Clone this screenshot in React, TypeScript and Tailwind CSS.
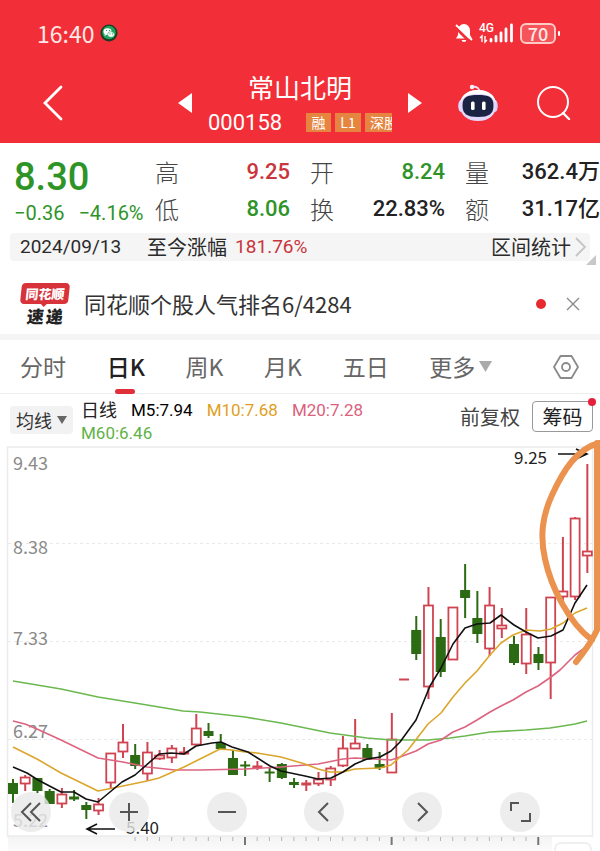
import React from "react";

type Candle = { up: boolean; high: number; top: number; bottom: number; low: number };

const c = (kind: "r" | "g", high: number, top: number, bottom: number, low: number): Candle => ({
  up: kind === "r",
  high,
  top,
  bottom,
  low,
});

const candles: Candle[] = [
  c("g", 779, 783, 794, 803),
  c("r", 775, 777, 784, 791),
  c("g", 778, 778, 791, 793),
  c("g", 789, 791, 804, 804),
  c("r", 788, 794, 804, 808),
  c("g", 790, 797, 799, 801),
  c("g", 802, 805, 810, 819),
  c("r", 798, 804, 811, 815),
  c("r", 753, 753, 783, 788),
  c("r", 724, 742, 752, 758),
  c("g", 744, 755, 766, 769),
  c("r", 742, 752, 774, 781),
  c("r", 750, 755, 759, 760),
  c("r", 745, 748, 758, 763),
  c("r", 747, 752, 754, 755),
  c("r", 714, 728, 745, 745),
  c("g", 723, 731, 736, 738),
  c("g", 734, 743, 749, 750),
  c("g", 750, 758, 775, 775),
  c("g", 761, 765, 766, 776),
  c("r", 761, 766, 768, 770),
  c("g", 768, 772, 773, 782),
  c("g", 763, 764, 778, 779),
  c("g", 778, 782, 785, 788),
  c("r", 780, 783, 785, 791),
  c("r", 772, 779, 784, 786),
  c("r", 766, 768, 780, 786),
  c("r", 736, 748, 766, 767),
  c("r", 719, 743, 749, 749),
  c("g", 744, 748, 760, 760),
  c("g", 752, 764, 768, 770),
  c("r", 713, 739, 773, 773),
  c("r", 679, 679, 680, 680),
  c("g", 616, 630, 654, 660),
  c("r", 587, 605, 687, 699),
  c("g", 619, 637, 672, 677),
  c("r", 607, 607, 660, 660),
  c("g", 564, 590, 598, 618),
  c("g", 591, 618, 634, 643),
  c("r", 587, 605, 649, 656),
  c("r", 608, 625, 629, 638),
  c("g", 636, 644, 663, 665),
  c("r", 608, 634, 664, 674),
  c("g", 647, 654, 663, 670),
  c("r", 597, 597, 663, 699),
  c("r", 537, 591, 597, 601),
  c("r", 517, 518, 597, 600),
  c("r", 464, 551, 556, 573),
];

const averages = [
  {
    color: "#6bb84f",
    points:
      "13,681 61,689 98,697 135,703 183,711 200,712 245,717 281,723 330,733 367,738 391,740 428,740 450,738 465,736 490,732 526,730 550,728 563,726 575,724 587,721",
  },
  {
    color: "#dc6480",
    points:
      "13,721 25,724 37,729 61,740 98,758 123,762 147,767 175,770 200,770 245,769 281,767 318,764 343,759 355,758 391,760 400,757 416,751 428,744 441,740 453,732 465,727 477,720 490,712 501,706 513,700 526,692 538,686 551,677 560,670 575,655 590,644",
  },
  {
    color: "#dba62b",
    points:
      "13,747 37,759 61,773 98,791 123,786 147,781 159,778 184,767 200,759 220,749 232,750 245,752 257,753 281,757 305,764 318,769 330,772 343,772 355,769 380,768 391,765 400,757 408,750 428,724 441,713 453,697 465,683 477,671 490,655 501,643 513,635 526,630 540,631 551,629 563,623 575,613 587,608",
  },
  {
    color: "#111111",
    points:
      "13,767 27,773 38,780 61,792 74,792 86,799 98,802 122,782 135,775 159,754 171,753 184,754 196,746 212,743 221,742 232,747 248,752 270,766 281,771 305,776 318,779 331,778 343,772 355,764 367,759 380,757 391,751 400,742 416,720 430,686 441,668 453,644 465,628 477,624 490,623 501,615 514,625 526,632 538,638 551,636 563,630 575,603 587,585",
  },
];

const RED = "#cf4450";
const GREEN = "#2c6a14";

function Chart() {
  const ticks = Array.from({ length: 34 }, (_, i) => 135 + i * 12.22);
  return (
    <svg viewBox="0 444 600 407" className="block w-full overflow-visible" role="img" aria-label="日K线图">
      <defs>
        <linearGradient id="scrub" x1="0" x2="0" y1="0" y2="1">
          <stop offset="0" stopColor="#f3f3f3" />
          <stop offset="1" stopColor="#fbfbfb" />
        </linearGradient>
      </defs>
      <rect x="8" y="836" width="544" height="15" fill="url(#scrub)" />
      <rect x="555" y="843" width="36" height="20" rx="6" fill="#fff" stroke="#f0f0f0" strokeWidth="2" />
      <rect x="7.5" y="447" width="585" height="389" fill="none" stroke="#ececec" strokeWidth="1.5" />
      {[543.5, 641.5, 739.5].map((y) => (
        <line key={y} x1="8" x2="592" y1={y} y2={y} stroke="#e9e9e9" strokeDasharray="3 3" />
      ))}
      {ticks.map((x, i) => {
        const major = i % 12 === 9;
        return (
          <line
            key={x}
            x1={x}
            x2={x}
            y1="837"
            y2={major ? 845 : 841}
            stroke={major ? "#777" : "#b5b5b5"}
            strokeWidth={major ? 2 : 1}
          />
        );
      })}
      <g fill="#8a8a8a" fontSize="18" fontFamily="'Noto Sans CJK SC', sans-serif">
        <text x="13" y="470">9.43</text>
        <text x="13" y="554">8.38</text>
        <text x="13" y="645">7.33</text>
        <text x="13" y="738">6.27</text>
        <text x="13" y="827">5.22</text>
      </g>
      {candles.map((k, i) => {
        const x = 13 + i * 12.22;
        const color = k.up ? RED : GREEN;
        const h = k.bottom - k.top;
        return (
          <g key={i} stroke={color} strokeWidth="2">
            {k.high < k.top && <line x1={x} x2={x} y1={k.high} y2={k.top} />}
            {k.low > k.bottom && <line x1={x} x2={x} y1={k.bottom} y2={k.low} />}
            {h < 3 ? (
              <line x1={x - 5} x2={x + 5} y1={k.top + h / 2} y2={k.top + h / 2} strokeWidth={h + 1} />
            ) : (
              <rect
                x={x - 4.5}
                y={k.top + 0.5}
                width="9"
                height={h - 1}
                fill={k.up ? "#fff" : color}
                strokeWidth={k.up ? 1.8 : 1}
              />
            )}
          </g>
        );
      })}
      {averages.map((a) => (
        <polyline key={a.color} points={a.points} fill="none" stroke={a.color} strokeWidth="1.6" strokeLinejoin="round" />
      ))}
      <g fill="#222" fontSize="17" fontFamily="'Noto Sans CJK SC', sans-serif">
        <text x="514" y="464">9.25</text>
        <text x="126" y="834">5.40</text>
      </g>
      <g fill="none" stroke="#111" strokeWidth="1.6">
        <path d="M558 454H586M576 449L587 454L576 459" />
        <path d="M115 829H87M97 824L87 829L97 834" />
      </g>
      <path
        d="M599 443C577 449 564 469 552 495C542 517 540 536 545 559C551 587 569 623 592 640M597 443V630Q590 645 576 662"
        fill="none"
        stroke="#eb924e"
        strokeWidth="6"
        strokeLinecap="round"
        strokeLinejoin="round"
      />
    </svg>
  );
}

const controls = [
  { label: "最早", d: "M20 11L11 20L20 29M29 11L20 20L29 29" },
  { label: "放大", d: "M20 11V29M11 20H29" },
  { label: "缩小", d: "M11 20H29" },
  { label: "向左", d: "M24 11L15 20L24 29" },
  { label: "向右", d: "M16 11L25 20L16 29" },
  { label: "全屏", d: "M11 19V11H19M30 21V29H21" },
];

function Robot() {
  return (
    <svg viewBox="0 0 40 38" className="h-[38px] w-10">
      <path d="M21 8Q22 3 15 2.5" fill="none" stroke="#f6dcf2" strokeWidth="1.8" />
      <circle cx="14" cy="3" r="2.2" fill="#fbeef8" />
      <ellipse cx="3" cy="22" rx="2.8" ry="6" fill="#e3d8fa" />
      <ellipse cx="37" cy="22" rx="2.8" ry="6" fill="#d9ccf6" />
      <path d="M20 6C32 6 38 13 38 21.5C38 31 31 37 20 37S2 31 2 21.5C2 13 8 6 20 6Z" fill="#e2d8fb" />
      <path d="M20 6C31 6 37 12 38 19C34 12 30 10 20 10S6 12 2 19C3 12 9 6 20 6Z" fill="#fff" />
      <path d="M20 11C31 11 35.5 13 35.5 21.5S31 33 20 33S4.5 30 4.5 21.5S9 11 20 11Z" fill="#1b2344" />
      <rect x="13" y="17.5" width="3.6" height="8.5" rx="1.5" fill="#fff" />
      <rect x="24" y="17.5" width="3.6" height="8.5" rx="1.5" fill="#fff" />
    </svg>
  );
}

function StatusBar() {
  return (
    <div className="flex h-[66px] items-center justify-between pr-10 pl-[37px] text-[#ffe9e6]">
      <div className="flex items-center gap-[6px]">
        <span className="text-[23px] leading-6">16:40</span>
        <svg viewBox="0 0 18 18" className="size-[18px]">
          <circle cx="9" cy="9" r="8.5" fill="#173d27" />
          <circle cx="9" cy="8.5" r="6.8" fill="#20a35c" />
          <ellipse cx="7.5" cy="7.5" rx="4" ry="3.3" fill="#fff" />
          <path d="M5 9L4.5 12L8 10Z" fill="#fff" />
          <ellipse cx="11" cy="10.5" rx="3.4" ry="2.8" fill="#fff" stroke="#20a35c" strokeWidth=".6" />
          <path d="M6 6.5h1M9 6.5h1M9.5 10h1M12 10h1" stroke="#20a35c" />
        </svg>
      </div>
      <div className="flex items-center gap-[6px]">
        <svg viewBox="0 0 18 20" className="h-5 w-[18px]">
          <path d="M9 1C12.5 1 15 4 15 7.5V12L17 15.5H1L3 12V7.5C3 4 5.5 1 9 1Z" fill="#fff" />
          <path d="M6.5 17H11.5Q11 19 9 19T6.5 17Z" fill="#fff" />
          <path d="M0 4L15 19" stroke="#f22f38" strokeWidth="3" />
          <path d="M1 2L17 17" stroke="#fff" strokeWidth="1.8" />
        </svg>
        <svg viewBox="0 -4 35 28" className="h-7 w-[35px]">
          <text x="0" y="9" fontSize="12" fontWeight="500" fill="#fff" fontFamily="Roboto, sans-serif">4G</text>
          <path d="M3 19V13L1 15M6 13V19L8 17" fill="none" stroke="#fff" strokeWidth="1.4" />
          <path d="M12 18V16.5M17 18V13.5M22 18V10M27 18V6M32.5 18V2" stroke="#fff" strokeWidth="2.8" strokeLinecap="round" />
        </svg>
        <div className="flex items-center gap-[2px]">
          <span className="flex h-[21px] w-9 items-center justify-center rounded-md border-2 border-[#ffc9c6] bg-[#f6545b] text-lg leading-4 font-medium">
            70
          </span>
          <span className="h-[5px] w-[2px] rounded-full bg-white" />
        </div>
      </div>
    </div>
  );
}

function Header() {
  return (
    <header className="bg-[#f22f38] text-white">
      <StatusBar />
      <div className="grid h-[77px] grid-cols-[1fr_auto_1fr] items-center">
        <button type="button" aria-label="返回" className="ml-[42px] w-6 pb-1">
          <svg viewBox="0 0 22 36" className="h-9 w-[22px]">
            <path d="M19 2L3 18L19 34" fill="none" stroke="#fff" strokeWidth="2.8" strokeLinecap="round" />
          </svg>
        </button>
        <div className="flex items-center gap-4">
          <button type="button" aria-label="上一只" className="pb-1">
            <svg viewBox="0 0 14 20" className="h-5 w-[14px]">
              <path d="M14 0V20L0 10Z" fill="#fff" />
            </svg>
          </button>
          <div className="flex w-[184px] flex-col items-center gap-[6px] pb-[2px]">
            <h1 className="text-[26px] leading-8">常山北明</h1>
            <div className="flex w-full items-center justify-between">
              <span className="font-['Roboto',sans-serif] text-[22px] leading-7">000158</span>
              <div className="flex w-[86px] gap-1 overflow-x-clip text-[14px] leading-[19px] whitespace-nowrap">
                <span className="w-[25px] shrink-0 bg-[#e6853f] text-center">融</span>
                <span className="w-[26px] shrink-0 bg-[#e6853f] text-center">L1</span>
                <span className="shrink-0 bg-[#e6853f] px-[5px]">深股</span>
              </div>
            </div>
          </div>
          <button type="button" aria-label="下一只" className="pb-1">
            <svg viewBox="0 0 14 20" className="h-5 w-[14px]">
              <path d="M0 0V20L14 10Z" fill="#fff" />
            </svg>
          </button>
        </div>
        <div className="flex items-center justify-end gap-[39px] pr-[29px] pb-1">
          <button type="button" aria-label="智能助手">
            <Robot />
          </button>
          <button type="button" aria-label="搜索">
            <svg viewBox="0 0 34 34" className="size-[34px]">
              <circle cx="16" cy="16" r="15" fill="none" stroke="#fff" strokeWidth="2" />
              <path d="M26 27L32 33" stroke="#fff" strokeWidth="2.4" strokeLinecap="round" />
            </svg>
          </button>
        </div>
      </div>
    </header>
  );
}

function Stat({ label, value, tone }: { label: string; value: string; tone: string }) {
  return (
    <div className="flex items-center justify-between">
      <dt className="text-2xl leading-[37px] font-light text-[#444]">{label}</dt>
      <dd className={`font-['Roboto','Noto_Sans_CJK_SC',sans-serif] text-[22px] leading-[37px] font-medium whitespace-nowrap ${tone}`}>
        {value}
      </dd>
    </div>
  );
}

function Quote() {
  return (
    <section className="flex h-[90px] pt-[10px] pl-[14px]">
      <div className="w-[141px] shrink-0 font-['Roboto',sans-serif] whitespace-nowrap text-[#2e9428]">
        <div className="text-[38px] leading-[48px] font-medium">8.30</div>
        <div className="flex gap-[14px] text-xl leading-6">
          <span>−0.36</span>
          <span>−4.16%</span>
        </div>
      </div>
      <dl className="grid flex-1 grid-cols-3 content-start gap-x-5">
        <Stat label="高" value="9.25" tone="text-[#c9353d]" />
        <Stat label="开" value="8.24" tone="text-[#2e9428]" />
        <Stat label="量" value="362.4万" tone="text-[#222]" />
        <Stat label="低" value="8.06" tone="text-[#2e9428]" />
        <Stat label="换" value="22.83%" tone="text-[#222]" />
        <Stat label="额" value="31.17亿" tone="text-[#222]" />
      </dl>
    </section>
  );
}

function RangeBar() {
  return (
    <div className="relative mx-[10px] flex h-7 items-center rounded bg-[#f5f5f5] pr-[3px] pl-[10px] text-[#2b2b2b]">
      <span className="font-['Roboto',sans-serif] text-[19px]">2024/09/13</span>
      <span className="ml-[26px] text-xl">至今涨幅</span>
      <span className="ml-2 font-['Roboto',sans-serif] text-[19px] text-[#c9353d]">181.76%</span>
      <button type="button" className="ml-auto flex items-center gap-1 text-xl">
        区间统计
        <svg viewBox="0 0 12 20" className="h-5 w-3">
          <path d="M1 1L10 10L1 19" fill="none" stroke="#c4c4c4" strokeWidth="1.8" />
        </svg>
      </button>
      <svg viewBox="0 0 10 10" className="absolute -right-[6px] -bottom-1 size-[10px]">
        <path d="M10 0V10H0Z" fill="#c8c8c8" />
      </svg>
    </div>
  );
}

function News() {
  return (
    <div className="flex h-[79px] items-center border-b-[6px] border-[#f5f5f5] pt-6 pr-5 pb-3 pl-5">
      <div className="flex w-[50px] flex-col items-center font-black">
        <span className="relative w-12 -skew-x-6 rounded-sm bg-[#d8323a] text-center text-[13px] leading-[21px] text-white">
          同花顺
          <svg viewBox="0 0 8 4" className="absolute -bottom-[3px] left-5 h-1 w-2">
            <path d="M0 0H8L4 4Z" fill="#d8323a" />
          </svg>
        </span>
        <span className="mt-[3px] flex -skew-x-6 gap-[2px] text-[17px] leading-[18px] text-[#222]">
          <span>速</span>
          <span>递</span>
        </span>
      </div>
      <p className="ml-[14px] text-[22px] text-[#333]">同花顺个股人气排名6/4284</p>
      <span className="ml-auto size-[10px] rounded-full bg-[#e62a2e]" />
      <button type="button" aria-label="关闭" className="ml-5">
        <svg viewBox="0 0 14 14" className="size-[14px]">
          <path d="M1 1L13 13M13 1L1 13" stroke="#8a8a8a" strokeWidth="1.4" />
        </svg>
      </button>
    </div>
  );
}

function Tabs() {
  return (
    <nav className="flex h-[54px] items-center justify-between border-b border-[#ededed] pr-[21px] pl-5 text-[23px] text-[#666]">
      <button type="button">分时</button>
      <button type="button" className="relative font-medium text-[#222]">
        日K
        <span className="absolute -bottom-[10px] left-2 h-[5px] w-5 rounded-full bg-[#e02f38]" />
      </button>
      <button type="button">周K</button>
      <button type="button">月K</button>
      <button type="button">五日</button>
      <button type="button" className="flex items-center gap-1">
        更多
        <svg viewBox="0 0 13 11" className="h-[11px] w-[13px]">
          <path d="M0 0H13L6.5 11Z" fill="#aaa" />
        </svg>
      </button>
      <button type="button" aria-label="设置" className="ml-5">
        <svg viewBox="0 0 26 26" className="size-[26px]">
          <path d="M7.5 2H18.5L25 13L18.5 24H7.5L1 13Z" fill="none" stroke="#8a8a8a" strokeWidth="1.8" strokeLinejoin="round" />
          <circle cx="13" cy="13" r="4" fill="none" stroke="#8a8a8a" strokeWidth="1.8" />
        </svg>
      </button>
    </nav>
  );
}

function Legend() {
  return (
    <div className="flex h-[50px] items-start pt-[3px] pr-[7px] pl-[10px]">
      <button type="button" className="mt-[9px] flex h-7 w-[63px] shrink-0 items-center justify-center gap-[5px] rounded bg-[#f2f2f2] text-lg text-[#333]">
        均线
        <svg viewBox="0 0 10 8" className="h-2 w-[10px]">
          <path d="M0 0H10L5 8Z" fill="#666" />
        </svg>
      </button>
      <div className="mt-[2px] ml-2 flex flex-1 flex-wrap gap-x-[14px] font-['Roboto','Noto_Sans_CJK_SC',sans-serif] text-[17px] leading-[23px]">
        <span className="text-lg leading-[23px] text-[#222]">日线</span>
        <span className="text-black">M5:7.94</span>
        <span className="text-[#dfa01d]">M10:7.68</span>
        <span className="text-[#dc5f7d]">M20:7.28</span>
        <span className="text-[#5fb246]">M60:6.46</span>
      </div>
      <button type="button" className="mt-1 ml-3 text-xl leading-[31px] whitespace-nowrap text-[#444]">前复权</button>
      <button type="button" className="relative mt-1 ml-3 h-[31px] w-[61px] rounded border border-[#999] text-xl leading-7 text-[#222]">
        筹码
        <span className="absolute -top-1 -right-1 size-2 rounded-full bg-[#e6203a]" />
      </button>
    </div>
  );
}

export default function App() {
  return (
    <div className="w-full overflow-hidden bg-white font-['Noto_Sans_CJK_SC',sans-serif]">
      <Header />
      <main>
        <Quote />
        <RangeBar />
        <News />
        <Tabs />
        <Legend />
        <div className="relative">
          <Chart />
          <div className="absolute right-[60px] bottom-[19px] left-[11px] flex justify-between">
            {controls.map((b) => (
              <button key={b.label} type="button" aria-label={b.label} className="size-10 rounded-full bg-[#e8e8e8]/80">
                <svg viewBox="0 0 40 40" className="size-10">
                  <path d={b.d} fill="none" stroke="#555" strokeWidth="2" />
                </svg>
              </button>
            ))}
          </div>
        </div>
      </main>
    </div>
  );
}
